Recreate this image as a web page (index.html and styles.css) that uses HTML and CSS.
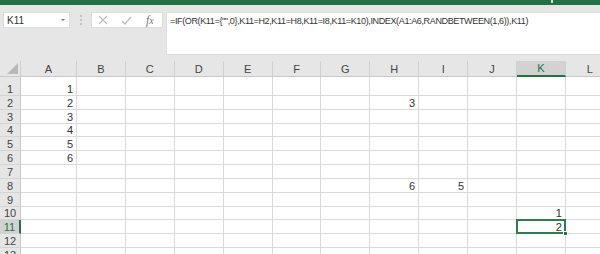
FILE: index.html
```html
<!DOCTYPE html>
<html lang="ja">
<head>
<meta charset="utf-8">
<title>Excel</title>
<link rel="stylesheet" href="styles.css">
</head>
<body>
<div class="app">
  <div class="titlebar"><span class="tb-icon"></span></div>
  <div class="fbar">
    <div class="namebox"><span class="nb-text">K11</span><span class="nb-arrow"></span></div>
    <div class="grip"><i></i><i></i><i></i></div>
    <div class="btns">
      <svg class="ico" width="10" height="10" viewBox="0 0 10 10"><path d="M1 1L9 9M9 1L1 9" stroke="#bdbdbd" stroke-width="1.1" fill="none"/></svg>
      <svg class="ico" width="11" height="9" viewBox="0 0 11 9"><path d="M1 5L4 8L10 1" stroke="#bdbdbd" stroke-width="1.3" fill="none"/></svg>
      <span class="fx">f<span class="fx-x">x</span></span>
    </div>
    <div class="formula">=IF(OR(K11={"",0},K11=H2,K11=H8,K11=I8,K11=K10),INDEX(A1:A6,RANDBETWEEN(1,6)),K11)</div>
  </div>
  <div class="sheet">
    <div class="row hdr">
      <div class="corner"><span class="tri"></span></div>
      <div class="ch">A</div><div class="ch">B</div><div class="ch">C</div><div class="ch">D</div><div class="ch">E</div><div class="ch">F</div><div class="ch">G</div><div class="ch">H</div><div class="ch">I</div><div class="ch">J</div><div class="ch ch-sel">K</div><div class="ch">L</div>
    </div>
    <div class="row r1">
      <div class="rh">1</div><div class="c">1</div><div class="c"></div><div class="c"></div><div class="c"></div><div class="c"></div><div class="c"></div><div class="c"></div><div class="c"></div><div class="c"></div><div class="c"></div><div class="c"></div><div class="c"></div>
    </div>
    <div class="row">
      <div class="rh">2</div><div class="c">2</div><div class="c"></div><div class="c"></div><div class="c"></div><div class="c"></div><div class="c"></div><div class="c"></div><div class="c">3</div><div class="c"></div><div class="c"></div><div class="c"></div><div class="c"></div>
    </div>
    <div class="row">
      <div class="rh">3</div><div class="c">3</div><div class="c"></div><div class="c"></div><div class="c"></div><div class="c"></div><div class="c"></div><div class="c"></div><div class="c"></div><div class="c"></div><div class="c"></div><div class="c"></div><div class="c"></div>
    </div>
    <div class="row">
      <div class="rh">4</div><div class="c">4</div><div class="c"></div><div class="c"></div><div class="c"></div><div class="c"></div><div class="c"></div><div class="c"></div><div class="c"></div><div class="c"></div><div class="c"></div><div class="c"></div><div class="c"></div>
    </div>
    <div class="row">
      <div class="rh">5</div><div class="c">5</div><div class="c"></div><div class="c"></div><div class="c"></div><div class="c"></div><div class="c"></div><div class="c"></div><div class="c"></div><div class="c"></div><div class="c"></div><div class="c"></div><div class="c"></div>
    </div>
    <div class="row">
      <div class="rh">6</div><div class="c">6</div><div class="c"></div><div class="c"></div><div class="c"></div><div class="c"></div><div class="c"></div><div class="c"></div><div class="c"></div><div class="c"></div><div class="c"></div><div class="c"></div><div class="c"></div>
    </div>
    <div class="row">
      <div class="rh">7</div><div class="c"></div><div class="c"></div><div class="c"></div><div class="c"></div><div class="c"></div><div class="c"></div><div class="c"></div><div class="c"></div><div class="c"></div><div class="c"></div><div class="c"></div><div class="c"></div>
    </div>
    <div class="row">
      <div class="rh">8</div><div class="c"></div><div class="c"></div><div class="c"></div><div class="c"></div><div class="c"></div><div class="c"></div><div class="c"></div><div class="c">6</div><div class="c">5</div><div class="c"></div><div class="c"></div><div class="c"></div>
    </div>
    <div class="row">
      <div class="rh">9</div><div class="c"></div><div class="c"></div><div class="c"></div><div class="c"></div><div class="c"></div><div class="c"></div><div class="c"></div><div class="c"></div><div class="c"></div><div class="c"></div><div class="c"></div><div class="c"></div>
    </div>
    <div class="row">
      <div class="rh">10</div><div class="c"></div><div class="c"></div><div class="c"></div><div class="c"></div><div class="c"></div><div class="c"></div><div class="c"></div><div class="c"></div><div class="c"></div><div class="c"></div><div class="c">1</div><div class="c"></div>
    </div>
    <div class="row">
      <div class="rh rh-sel">11</div><div class="c"></div><div class="c"></div><div class="c"></div><div class="c"></div><div class="c"></div><div class="c"></div><div class="c"></div><div class="c"></div><div class="c"></div><div class="c"></div><div class="c active">2<span class="selbox"><span class="handle"></span></span></div><div class="c"></div>
    </div>
    <div class="row">
      <div class="rh">12</div><div class="c"></div><div class="c"></div><div class="c"></div><div class="c"></div><div class="c"></div><div class="c"></div><div class="c"></div><div class="c"></div><div class="c"></div><div class="c"></div><div class="c"></div><div class="c"></div>
    </div>
    <div class="row">
      <div class="rh">13</div><div class="c"></div><div class="c"></div><div class="c"></div><div class="c"></div><div class="c"></div><div class="c"></div><div class="c"></div><div class="c"></div><div class="c"></div><div class="c"></div><div class="c"></div><div class="c"></div>
    </div>
  </div>
</div>
</body>
</html>
```

FILE: styles.css
```css
html, body {
  margin: 0;
  padding: 0;
  background: #e6e6e6;
  overflow: hidden;
  width: 600px;
  height: 254px;
}

.app {
  font-family: "Liberation Sans", Arial, sans-serif;
  color: #333;
}

.titlebar {
  height: 5px;
  background: #217346;
  position: relative;
}

.tb-icon {
  position: absolute;
  left: 551px;
  top: 0;
  width: 2px;
  height: 3px;
  background: #cfe3d7;
}

.fbar {
  display: flex;
  align-items: flex-start;
  padding: 7px 0 0 3px;
  height: 43px;
}

.namebox {
  box-sizing: border-box;
  width: 67px;
  height: 16px;
  background: #fff;
  border: 1px solid #dcdcdc;
  display: flex;
  align-items: center;
  justify-content: space-between;
  padding: 0 4px 0 3px;
}

.nb-text {
  font-size: 10px;
  color: #333;
}

.nb-arrow {
  width: 0;
  height: 0;
  border-left: 2.5px solid transparent;
  border-right: 2.5px solid transparent;
  border-top: 2.5px solid #777;
}

.grip {
  width: 21px;
  height: 16px;
  display: flex;
  flex-direction: column;
  align-items: center;
  justify-content: center;
  gap: 2px;
}

.grip i {
  display: block;
  width: 2px;
  height: 2px;
  background: #c4c4c4;
}

.btns {
  box-sizing: border-box;
  width: 72px;
  height: 16px;
  background: #fff;
  border: 1px solid #dcdcdc;
  display: flex;
  align-items: center;
  padding-left: 6px;
}

.ico {
  display: block;
}

.ico + .ico {
  margin-left: 13px;
}

.fx {
  margin-left: 14px;
  font-family: "Liberation Serif", serif;
  font-style: italic;
  font-size: 12px;
  color: #777;
  line-height: 1;
}

.fx-x {
  font-size: 10px;
}

.formula {
  box-sizing: border-box;
  margin-left: 3px;
  flex: 1;
  height: 43px;
  background: #fff;
  border: 1px solid #dcdcdc;
  border-right: none;
  font-size: 9px;
  letter-spacing: -0.36px;
  color: #333;
  padding: 3px 0 0 3px;
  white-space: nowrap;
  overflow: hidden;
}

.sheet {
  margin-top: 6px;
  width: 600px;
  overflow: hidden;
}

.row {
  display: grid;
  grid-template-columns: 21px 56px repeat(11, 48.9px);
  height: 13.82px;
}

.row.hdr {
  height: 16px;
}

.row.r1 {
  height: 19px;
}

.corner {
  position: relative;
  background: #e6e6e6;
  border-right: 1px solid #d0d0d0;
  border-bottom: 1px solid #c8c8c8;
  box-sizing: border-box;
}

.tri {
  position: absolute;
  right: 2px;
  bottom: 2px;
  width: 0;
  height: 0;
  border-left: 11px solid transparent;
  border-bottom: 11px solid #b9b9b9;
}

.ch {
  box-sizing: border-box;
  background: #e6e6e6;
  border-right: 1px solid #d0d0d0;
  border-bottom: 1px solid #c8c8c8;
  font-size: 11px;
  color: #444;
  display: flex;
  align-items: center;
  justify-content: center;
}

.ch-sel {
  background: #d2d2d2;
  color: #217346;
  border-bottom: 2px solid #217346;
}

.rh {
  box-sizing: border-box;
  background: #e6e6e6;
  border-right: 1px solid #c8c8c8;
  border-bottom: 1px solid #d4d4d4;
  font-size: 11px;
  color: #444;
  display: flex;
  align-items: flex-end;
  justify-content: center;
  line-height: 12px;
}

.rh-sel {
  background: #d2d2d2;
  color: #217346;
  border-right: 2px solid #217346;
}

.c {
  box-sizing: border-box;
  background: #fff;
  border-right: 1px solid #dadada;
  border-bottom: 1px solid #dadada;
  font-size: 11px;
  color: #333;
  display: flex;
  align-items: flex-end;
  justify-content: flex-end;
  padding-right: 3px;
  line-height: 12px;
}

.active {
  position: relative;
}

.selbox {
  position: absolute;
  left: -1px;
  top: -1px;
  right: -1px;
  bottom: -1px;
  border: 2px solid #2e7d52;
}

.handle {
  position: absolute;
  right: -4px;
  bottom: -4px;
  width: 5px;
  height: 5px;
  background: #217346;
  border: 1px solid #fff;
  box-sizing: border-box;
}
```
